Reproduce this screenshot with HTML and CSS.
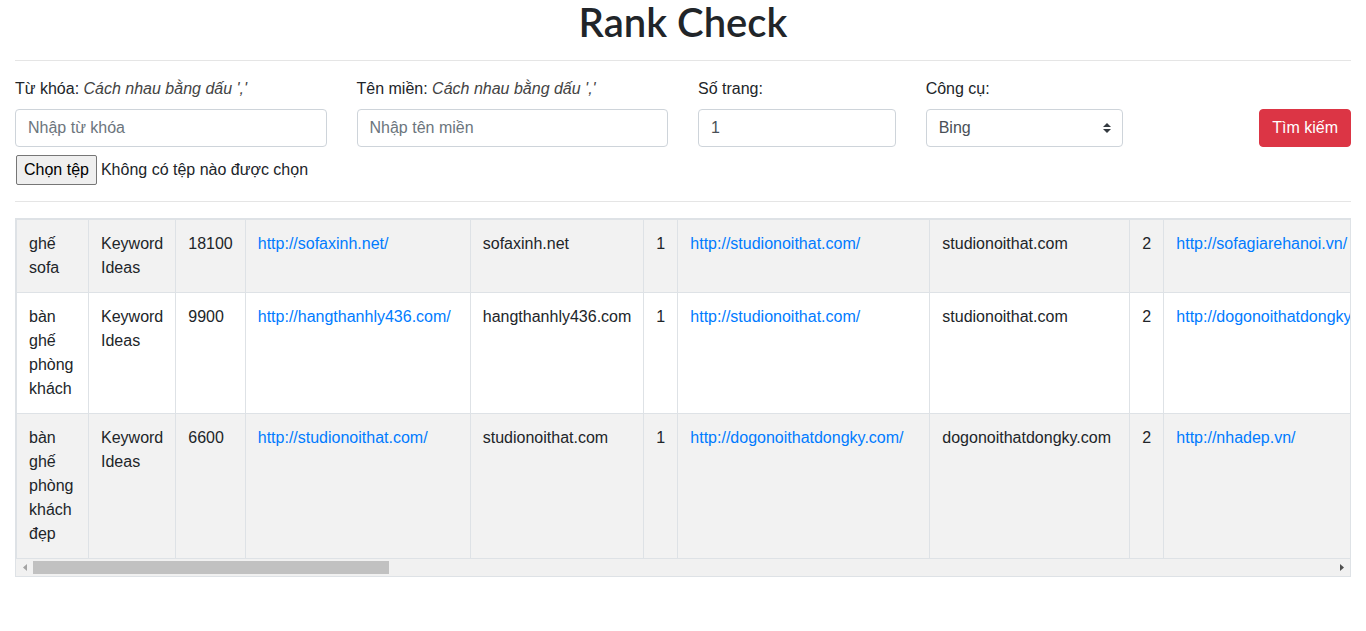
FILE: index.html
```html
<!DOCTYPE html>
<html lang="vi">
<head>
<meta charset="utf-8">
<title>Rank Check</title>
<link rel="stylesheet" href="styles.css">
</head>
<body>
<div class="container">
  <h1 class="title">Rank Check</h1>
  <hr class="divider">
  <form class="form-row">
    <div class="col">
      <label class="label">Từ khóa: <i class="hint">Cách nhau bằng dấu ','</i></label>
      <input class="control" type="text" placeholder="Nhập từ khóa">
      <div class="file-row">
        <span class="file-btn">Chọn tệp</span>
        <span class="file-text">Không có tệp nào được chọn</span>
      </div>
    </div>
    <div class="col">
      <label class="label">Tên miền: <i class="hint">Cách nhau bằng dấu ','</i></label>
      <input class="control" type="text" placeholder="Nhập tên miền">
    </div>
    <div class="col">
      <label class="label">Số trang:</label>
      <input class="control" type="text" value="1">
    </div>
    <div class="col">
      <label class="label">Công cụ:</label>
      <div class="select-wrap">
        <select class="control select">
          <option>Bing</option>
          <option>Google</option>
        </select>
        <svg class="select-arrow" width="8" height="10" viewBox="0 0 4 5"><path fill="#343a40" d="M2 0L0 2h4zm0 5L0 3h4z"/></svg>
      </div>
    </div>
    <div class="col col-end">
      <label class="label">&nbsp;</label>
      <button type="button" class="btn-danger">Tìm kiếm</button>
    </div>
  </form>
  <hr class="divider">
  <div class="table-wrap">
    <div class="table-scroll">
      <table class="table">
        <colgroup>
          <col class="w-key"><col class="w-src"><col class="w-vol">
          <col class="w-url1"><col class="w-dom1"><col class="w-idx">
          <col class="w-url2"><col class="w-dom2"><col class="w-idx">
        </colgroup>
        <tbody>
          <tr class="odd">
            <td>ghế sofa</td><td>Keyword Ideas</td><td>18100</td>
            <td><a href="#">http://sofaxinh.net/</a></td><td>sofaxinh.net</td><td>1</td>
            <td><a href="#">http://studionoithat.com/</a></td><td>studionoithat.com</td><td>2</td>
            <td><a href="#">http://sofagiarehanoi.vn/</a></td><td>sofagiarehanoi.vn</td><td>3</td>
            <td><a href="#">http://noithathoanggia.vn/</a></td><td>noithathoanggia.vn</td><td>4</td>
            <td><a href="#">http://sofadep.com.vn/</a></td><td>sofadep.com.vn</td><td>5</td>
            <td><a href="#">http://ghesofa.net/</a></td><td>ghesofa.net</td><td>6</td>
            <td><a href="#">http://sofahanoi.com/</a></td><td>sofahanoi.com</td><td>7</td>
            <td><a href="#">http://noithatxinh.vn/</a></td><td>noithatxinh.vn</td><td>8</td>
            <td><a href="#">http://sofagiadinh.vn/</a></td><td>sofagiadinh.vn</td><td>9</td>
            <td><a href="#">http://banghesofa.com/</a></td><td>banghesofa.com</td><td>10</td>
          </tr>
          <tr>
            <td>bàn ghế phòng khách</td><td>Keyword Ideas</td><td>9900</td>
            <td><a href="#">http://hangthanhly436.com/</a></td><td>hangthanhly436.com</td><td>1</td>
            <td><a href="#">http://studionoithat.com/</a></td><td>studionoithat.com</td><td>2</td>
            <td><a href="#">http://dogonoithatdongky.com/</a></td><td>dogonoithatdongky.com</td><td>3</td>
            <td><a href="#">http://nhadep.vn/</a></td><td>nhadep.vn</td><td>4</td>
            <td><a href="#">http://noithathoanggia.vn/</a></td><td>noithathoanggia.vn</td><td>5</td>
            <td><a href="#">http://sofadep.com.vn/</a></td><td>sofadep.com.vn</td><td>6</td>
            <td><a href="#">http://banghephongkhach.vn/</a></td><td>banghephongkhach.vn</td><td>7</td>
            <td><a href="#">http://noithatxinh.vn/</a></td><td>noithatxinh.vn</td><td>8</td>
            <td><a href="#">http://sofagiadinh.vn/</a></td><td>sofagiadinh.vn</td><td>9</td>
            <td><a href="#">http://banghesofa.com/</a></td><td>banghesofa.com</td><td>10</td>
          </tr>
          <tr class="odd">
            <td>bàn ghế phòng khách đẹp</td><td>Keyword Ideas</td><td>6600</td>
            <td><a href="#">http://studionoithat.com/</a></td><td>studionoithat.com</td><td>1</td>
            <td><a href="#">http://dogonoithatdongky.com/</a></td><td>dogonoithatdongky.com</td><td>2</td>
            <td><a href="#">http://nhadep.vn/</a></td><td>nhadep.vn</td><td>3</td>
            <td><a href="#">http://hangthanhly436.com/</a></td><td>hangthanhly436.com</td><td>4</td>
            <td><a href="#">http://noithathoanggia.vn/</a></td><td>noithathoanggia.vn</td><td>5</td>
            <td><a href="#">http://sofadep.com.vn/</a></td><td>sofadep.com.vn</td><td>6</td>
            <td><a href="#">http://banghephongkhach.vn/</a></td><td>banghephongkhach.vn</td><td>7</td>
            <td><a href="#">http://noithatxinh.vn/</a></td><td>noithatxinh.vn</td><td>8</td>
            <td><a href="#">http://sofagiadinh.vn/</a></td><td>sofagiadinh.vn</td><td>9</td>
            <td><a href="#">http://banghesofa.com/</a></td><td>banghesofa.com</td><td>10</td>
          </tr>
        </tbody>
      </table>
    </div>
    <div class="hscroll">
      <span class="sb-btn"><svg width="4" height="7" viewBox="0 0 4 7"><path fill="#a3a3a3" d="M4 0L0 3.5 4 7z"/></svg></span>
      <div class="sb-track"><div class="sb-thumb"></div></div>
      <span class="sb-btn"><svg width="4" height="7" viewBox="0 0 4 7"><path fill="#505050" d="M0 0L4 3.5 0 7z"/></svg></span>
    </div>
  </div>
</div>
</body>
</html>
```
FILE: styles.css
```css
* { box-sizing: border-box; }
html, body { margin: 0; padding: 0; background: #fff; }
body {
  font-family: "Liberation Sans", Arial, sans-serif;
  font-size: 16px;
  line-height: 1.5;
  color: #212529;
}
.container { padding: 0 15px; }
.title {
  margin: 0;
  font-family: Lato, "Liberation Sans", sans-serif;
  font-size: 40px;
  line-height: 44px;
  font-weight: 600;
  text-align: center;
  color: #212529;
}
.divider {
  margin: 16px 0;
  border: 0;
  border-top: 1px solid rgba(0,0,0,.1);
  height: 0;
}
.form-row {
  display: grid;
  grid-template-columns: 3fr 3fr 2fr 2fr 2fr;
  margin: 0 -15px;
}
.col {
  padding: 0 15px;
  display: flex;
  flex-direction: column;
  align-items: stretch;
}
.col-end { align-items: flex-end; }
.label {
  display: block;
  margin-bottom: 8px;
  line-height: 24px;
  align-self: stretch;
}
.hint { font-style: italic; color: #444; }
.control {
  display: block;
  width: 100%;
  height: 38px;
  padding: 6px 12px;
  font-family: inherit;
  font-size: 16px;
  line-height: 24px;
  color: #495057;
  background: #fff;
  border: 1px solid #ced4da;
  border-radius: 4px;
  outline: none;
  margin: 0;
}
.control::placeholder { color: #6c757d; opacity: 1; }
.select-wrap { position: relative; }
.select {
  appearance: none;
  -webkit-appearance: none;
  padding-right: 28px;
}
.select-arrow {
  position: absolute;
  right: 12px;
  top: 14px;
  pointer-events: none;
}
.file-row {
  display: flex;
  align-items: center;
  margin-top: 8px;
  height: 30px;
  white-space: nowrap;
}
.file-btn {
  display: inline-flex;
  align-items: center;
  height: 30px;
  padding: 0 7px;
  margin-left: 1px;
  border: 1px solid #767676;
  border-radius: 2px;
  background: #efefef;
  color: #000;
  font-size: 16px;
}
.file-text { margin-left: 4px; color: #212529; }
.btn-danger {
  height: 38px;
  padding: 6px 12px;
  font-family: inherit;
  font-size: 16px;
  line-height: 24px;
  color: #fff;
  background: #dc3545;
  border: 1px solid #dc3545;
  border-radius: 4px;
}
.table-wrap {
  border: 1px solid #dee2e6;
}
.table-scroll {
  overflow: hidden;
}
.table {
  border-collapse: collapse;
  border: 1px solid #dee2e6;
  width: max-content;
  color: #212529;
}
.w-key { width: 72px; }
.w-src { width: 87px; }
.w-vol { width: 69px; }
.w-url1 { width: 225px; }
.w-dom1 { width: 173px; }
.w-idx { width: 34px; }
.w-url2 { width: 252px; }
.w-dom2 { width: 200px; }
.table td {
  border: 1px solid #dee2e6;
  padding: 12px;
  vertical-align: top;
  line-height: 24px;
}
.table tr.odd td { background: #f2f2f2; }
.table a { color: #007bff; text-decoration: none; white-space: nowrap; }
.hscroll {
  display: flex;
  height: 17px;
  background: #f1f1f1;
}
.sb-btn {
  width: 17px;
  flex: none;
  display: flex;
  align-items: center;
  justify-content: center;
}
.sb-track { flex: 1; padding-top: 2px; }
.sb-thumb {
  width: 356px;
  height: 13px;
  background: #c1c1c1;
}
```
